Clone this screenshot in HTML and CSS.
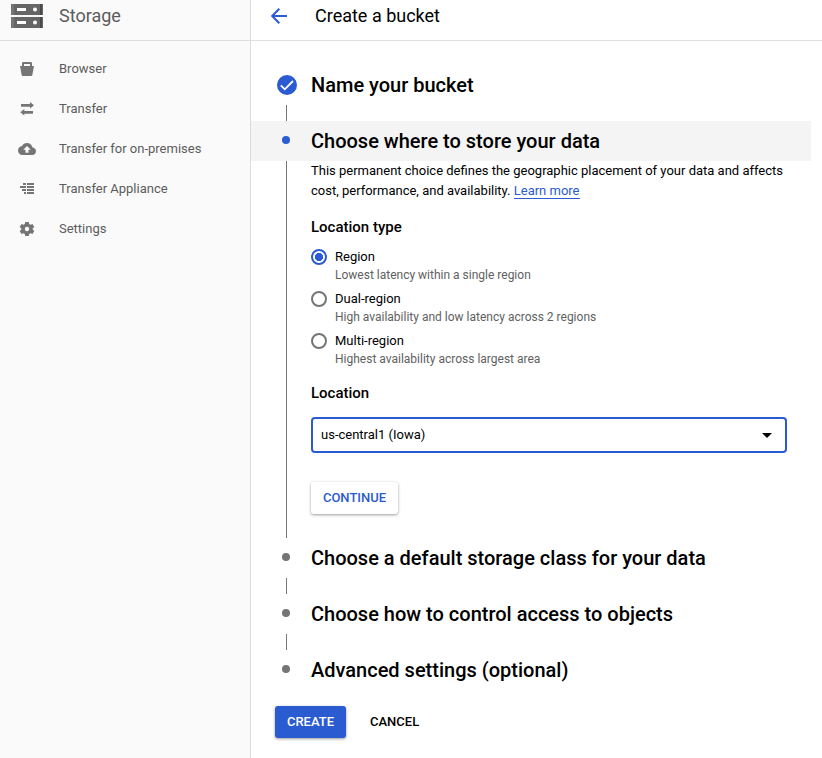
FILE: index.html
```html
<!DOCTYPE html>
<html lang="en">
<head>
<meta charset="utf-8">
<title>Create a bucket</title>
<link rel="stylesheet" href="styles.css">
</head>
<body>
<div class="app">
  <aside class="sidebar">
    <div class="product">
      <svg class="logo" width="32" height="24" viewBox="0 0 32 24">
        <path fill="#666" d="M0 0h32v11H0zM0 13h32v11H0z"/>
        <path fill="#757575" d="M0 0h3v11H0zM0 13h3v11H0z"/>
        <path fill="#4a4a4a" d="M29 0h2v11h-2zM29 13h2v11h-2z"/>
        <path fill="#fff" d="M6 4h9v3H6zM6 17h9v3H6z"/>
        <circle cx="24" cy="5.500" r="2" fill="#fff"/><circle cx="24" cy="18.500" r="2" fill="#fff"/>
      </svg>
      <span class="product-name">Storage</span>
    </div>
    <nav class="nav">
      <a class="nav-item"><svg class="icon" viewBox="0 0 18 18"><path fill-rule="evenodd" d="M2 6h2V3.300Q4 2 5.300 2h7.400Q14 2 14 3.300V6h2l-1.600 8.800Q14.200 16 13 16H5Q3.800 16 3.600 14.800zM6 4v2h6V4z"/></svg><span>Browser</span></a>
      <a class="nav-item"><svg class="icon" viewBox="0 0 18 18"><path d="M3 4.100h9V2l4 3.300-4 3.300V6.700H3zM15 11.100H6.300V9l-4 3.300 4 3.300v-1.900H15z"/></svg><span>Transfer</span></a>
      <a class="nav-item"><svg class="icon" viewBox="0 0 18 18"><path transform="scale(.75)" d="M19.350 10.040C18.670 6.590 15.640 4 12 4 9.110 4 6.600 5.640 5.350 8.040 2.340 8.360 0 10.910 0 14c0 3.310 2.690 6 6 6h13c2.760 0 5-2.240 5-5 0-2.640-2.050-4.780-4.650-4.960zM14 13v4h-4v-4H7l5-5 5 5z"/></svg><span>Transfer for on-premises</span></a>
      <a class="nav-item"><svg class="icon" viewBox="0 0 18 18" shape-rendering="crispEdges"><path d="M5 3h3v2H5zM9 3h7v2H9zM2 6h6v2H2zM9 6h7v2H9zM4 9h4v2H4zM9 9h7v2H9zM6 12h2v2H6zM9 12h7v2H9z"/></svg><span>Transfer Appliance</span></a>
      <a class="nav-item"><svg class="icon" viewBox="0 0 18 18"><path fill-rule="evenodd" d="M7.200 2h3.600l.4 2 1.400.8 1.900-.7 1.800 3-1.600 1.300v1.200l1.600 1.300-1.800 3-1.900-.7-1.400.8-.4 2H7.200l-.4-2-1.400-.8-1.900.7-1.800-3 1.600-1.300V8.400L1.700 7.100l1.800-3 1.900.7L6.800 4zM9 6.800a2.200 2.200 0 1 0 0 4.400a2.200 2.200 0 0 0 0-4.400z"/></svg><span>Settings</span></a>
    </nav>
  </aside>
  <main class="main">
    <header class="header">
      <svg class="back" width="16" height="16" viewBox="0 0 16 16" fill="none" stroke="#2b5bd1" stroke-width="2"><path d="M16 8H1.500M8.300 .8L1.200 8l7.100 7.200"/></svg>
      <h1 class="page-title">Create a bucket</h1>
    </header>
    <section class="steps">
      <div class="step">
        <div class="marker"><svg class="done" width="20" height="20" viewBox="0 0 20 20"><circle cx="10" cy="10" r="10" fill="#2b5bd1"/><path d="M3.800 10.300l4 4L16 6" fill="none" stroke="#fff" stroke-width="1.800"/></svg></div>
        <h2 class="step-title">Name your bucket</h2>
      </div>
      <div class="connector"></div>
      <div class="step current">
        <div class="marker"><span class="dot"></span></div>
        <h2 class="step-title">Choose where to store your data</h2>
      </div>
      <div class="step-body">
        <p class="intro">This permanent choice defines the geographic placement of your data and affects<br>cost, performance, and availability. <a class="link">Learn more</a></p>
        <h3 class="label type">Location type</h3>
        <div class="option"><span class="radio checked"></span><div><div class="option-name">Region</div><div class="option-hint">Lowest latency within a single region</div></div></div>
        <div class="option"><span class="radio"></span><div><div class="option-name">Dual-region</div><div class="option-hint">High availability and low latency across 2 regions</div></div></div>
        <div class="option"><span class="radio"></span><div><div class="option-name">Multi-region</div><div class="option-hint">Highest availability across largest area</div></div></div>
        <h3 class="label place">Location</h3>
        <div class="select"><span>us-central1 (Iowa)</span><svg width="10" height="5" viewBox="0 0 10 5"><path d="M0 0h10L5 5z"/></svg></div>
        <button class="button raised">CONTINUE</button>
      </div>
      <div class="step">
        <div class="marker"><span class="dot"></span></div>
        <h2 class="step-title">Choose a default storage class for your data</h2>
      </div>
      <div class="connector"></div>
      <div class="step">
        <div class="marker"><span class="dot"></span></div>
        <h2 class="step-title">Choose how to control access to objects</h2>
      </div>
      <div class="connector"></div>
      <div class="step">
        <div class="marker"><span class="dot"></span></div>
        <h2 class="step-title">Advanced settings (optional)</h2>
      </div>
    </section>
    <div class="actions">
      <button class="button primary">CREATE</button>
      <button class="button text">CANCEL</button>
    </div>
  </main>
</div>
</body>
</html>
```
FILE: styles.css
```css
* { box-sizing: border-box; }
body { margin: 0; font: 13px/20px Roboto, sans-serif; color: #000; background: #fff; }
h1, h2, h3, p { margin: 0; }
.app { display: flex; height: 758px; overflow: hidden; }
.sidebar { width: 251px; flex: none; background: #fafafa; border-right: 1px solid #dcdcdc; color: #5c5c5c; }
.product { height: 41px; border-bottom: 1px solid #dcdcdc; display: flex; padding: 4px 0 0 11px; }
.product-name { font-size: 18px; line-height: 24px; margin-left: 16px; }
.nav { padding-top: 8px; }
.nav-item { display: flex; align-items: center; height: 40px; padding-left: 18px; }
.icon { width: 18px; height: 18px; margin-right: 23px; fill: #757575; }
.main { flex: 1; }
.header { display: flex; height: 41px; border-bottom: 1px solid #e0e0e0; padding: 4px 0 0 20px; }
.back { margin-top: 4px; }
.page-title { font-size: 18px; font-weight: 400; line-height: 24px; margin-left: 28px; }
.steps { padding-top: 24px; width: 560px; }
.step { display: flex; height: 40px; align-items: center; }
.current { background: #f4f4f4; }
.marker { width: 60px; padding-left: 26px; display: flex; }
.dot { width: 8px; height: 8px; border-radius: 50%; background: #757575; margin: 0 0 2px 5px; }
.current .dot { background: #2b5bd1; }
.step-title { font-size: 20px; font-weight: 500; line-height: 24px; }
.connector { height: 16px; margin-left: 35px; border-left: 1px solid #757575; }
.step-body { height: 377px; margin-left: 35px; padding-left: 24px; border-left: 1px solid #757575; }
.intro { white-space: nowrap; }
.link { color: #2b5bd1; border-bottom: 1px solid #2b5bd1; }
.label { font-size: 15px; font-weight: 500; line-height: 20px; }
.type { margin: 16px 0 10px; }
.option { display: flex; height: 42px; }
.radio { width: 16px; height: 16px; border: 2px solid #757575; border-radius: 50%; margin: 2px 8px 0 0; flex: none; }
.checked { border-color: #2b5bd1; background: radial-gradient(circle, #2b5bd1 3.800px, transparent 4.400px); }
.option-name { line-height: 20px; }
.option-hint { font-size: 12px; line-height: 16px; color: #616161; }
.place { margin: 10px 0 14px; }
.select { width: 476px; height: 36px; border: 2px solid #2b5bd1; border-radius: 4px; display: flex; align-items: center; justify-content: space-between; padding: 0 13px 0 8px; }
.button { font: 500 13px/32px Roboto, sans-serif; height: 32px; padding: 0; border: 0; border-radius: 3px; background: none; color: #000; }
.raised { width: 87px; margin-top: 29px; background: #fff; color: #2b5bd1; box-shadow: 0 1px 3px rgba(0,0,0,.4); }
.actions { display: flex; padding: 16px 0 0 24px; }
.primary { width: 71px; background: #2b5bd1; color: #fff; box-shadow: 0 1px 3px rgba(0,0,0,.4); }
.text { margin-left: 24px; }
```
